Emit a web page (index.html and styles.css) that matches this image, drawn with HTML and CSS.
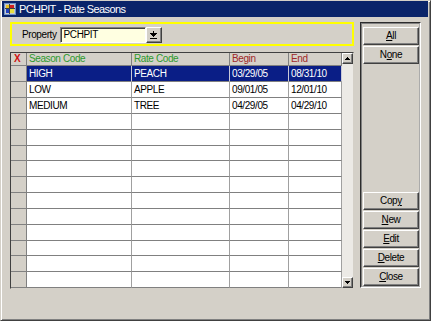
FILE: index.html
```html
<!DOCTYPE html>
<html>
<head>
<meta charset="utf-8">
<link rel="stylesheet" href="styles.css">
</head>
<body>
<div class="window">
  <div class="titlebar">
    <svg class="appicon" width="12" height="12" viewBox="0 0 12 12" shape-rendering="crispEdges">
      <rect x="0" y="0" width="12" height="12" fill="#6a8fc8"/>
      <rect x="1" y="1" width="10" height="10" fill="#c8c8c8"/>
      <rect x="2" y="2" width="4" height="4" fill="#e8c020"/>
      <rect x="6" y="2" width="4" height="4" fill="#d02020"/>
      <rect x="2" y="6" width="4" height="4" fill="#2040c0"/>
      <rect x="6" y="6" width="4" height="4" fill="#e8e040"/>
      <rect x="5" y="1" width="1" height="10" fill="#404040"/>
      <rect x="1" y="5" width="10" height="1" fill="#404040"/>
    </svg>
    <span class="title">PCHPIT - Rate Seasons</span>
  </div>
  <div class="content">
    <div class="leftcol">
      <div class="filter">
        <span class="label">Property</span>
        <div class="input">PCHPIT</div>
        <div class="ddbtn">
          <svg width="7" height="8" viewBox="0 0 7 8" shape-rendering="crispEdges">
            <rect x="3" y="0" width="1" height="2" fill="#000"/>
            <rect x="0" y="2" width="7" height="1" fill="#000"/>
            <rect x="1" y="3" width="5" height="1" fill="#000"/>
            <rect x="2" y="4" width="3" height="1" fill="#000"/>
            <rect x="3" y="5" width="1" height="1" fill="#000"/>
            <rect x="0" y="7" width="7" height="1" fill="#000"/>
          </svg>
        </div>
      </div>
      <div class="grid">
        <div class="table">
          <div class="hc sel-col"><span class="x">X</span></div>
          <div class="hc green">Season Code</div>
          <div class="hc green">Rate Code</div>
          <div class="hc red">Begin</div>
          <div class="hc red">End</div>

          <div class="rs"></div><div class="c sel">HIGH</div><div class="c sel">PEACH</div><div class="c sel">03/29/05</div><div class="c sel">08/31/10</div>
          <div class="rs"></div><div class="c">LOW</div><div class="c">APPLE</div><div class="c">09/01/05</div><div class="c">12/01/10</div>
          <div class="rs"></div><div class="c">MEDIUM</div><div class="c">TREE</div><div class="c">04/29/05</div><div class="c">04/29/10</div>
          <div class="rs"></div><div class="c"></div><div class="c"></div><div class="c"></div><div class="c"></div>
          <div class="rs"></div><div class="c"></div><div class="c"></div><div class="c"></div><div class="c"></div>
          <div class="rs"></div><div class="c"></div><div class="c"></div><div class="c"></div><div class="c"></div>
          <div class="rs"></div><div class="c"></div><div class="c"></div><div class="c"></div><div class="c"></div>
          <div class="rs"></div><div class="c"></div><div class="c"></div><div class="c"></div><div class="c"></div>
          <div class="rs"></div><div class="c"></div><div class="c"></div><div class="c"></div><div class="c"></div>
          <div class="rs"></div><div class="c"></div><div class="c"></div><div class="c"></div><div class="c"></div>
          <div class="rs"></div><div class="c"></div><div class="c"></div><div class="c"></div><div class="c"></div>
          <div class="rs"></div><div class="c"></div><div class="c"></div><div class="c"></div><div class="c"></div>
          <div class="rs"></div><div class="c"></div><div class="c"></div><div class="c"></div><div class="c"></div>
          <div class="rs"></div><div class="c"></div><div class="c"></div><div class="c"></div><div class="c"></div>
        </div>
        <div class="scrollbar">
          <div class="sbbtn">
            <svg width="5" height="3" viewBox="0 0 5 3" shape-rendering="crispEdges"><rect x="2" y="0" width="1" height="1"/><rect x="1" y="1" width="3" height="1"/><rect x="0" y="2" width="5" height="1"/></svg>
          </div>
          <div class="sbtrack"></div>
          <div class="sbbtn">
            <svg width="5" height="3" viewBox="0 0 5 3" shape-rendering="crispEdges"><rect x="0" y="0" width="5" height="1"/><rect x="1" y="1" width="3" height="1"/><rect x="2" y="2" width="1" height="1"/></svg>
          </div>
        </div>
      </div>
    </div>
    <div class="panel">
      <div class="group">
        <div class="btn"><u>A</u>ll</div>
        <div class="btn">N<u>o</u>ne</div>
      </div>
      <div class="group">
        <div class="btn">Cop<u>y</u></div>
        <div class="btn"><u>N</u>ew</div>
        <div class="btn"><u>E</u>dit</div>
        <div class="btn"><u>D</u>elete</div>
        <div class="btn"><u>C</u>lose</div>
      </div>
    </div>
  </div>
</div>
</body>
</html>
```
FILE: styles.css
```css
* { box-sizing: border-box; }
html, body { margin: 0; padding: 0; }
body {
  width: 431px;
  height: 321px;
  background: #d4d0c8;
  font-family: "Liberation Sans", Arial, sans-serif;
  font-size: 10px;
  letter-spacing: -0.4px;
  color: #000;
  overflow: hidden;
}
.window {
  width: 431px;
  height: 321px;
  background: #d4d0c8;
  border: 1px solid;
  border-color: #d4d0c8 #404040 #404040 #d4d0c8;
  box-shadow: inset 1px 1px #ffffff, inset -1px -1px #808080;
  padding: 0 2px 0 1px;
}
.titlebar {
  height: 16px;
  background: #0a246a;
  color: #fff;
  display: flex;
  align-items: center;
  padding-left: 2px;
  gap: 3px;
  font-size: 11px;
  letter-spacing: -0.6px;
}
.title { line-height: 16px; }
.appicon { display: block; }
.content {
  display: flex;
  padding: 5px 0 0 8px;
  gap: 6px;
}
.leftcol {
  width: 344px;
  display: flex;
  flex-direction: column;
  gap: 6px;
}
.filter {
  height: 24px;
  border: 2px solid #ffff00;
  display: flex;
  align-items: flex-start;
  padding: 3px 0 0 10px;
}
.label { line-height: 16px; margin-right: 3px; }
.input {
  width: 86px;
  height: 16px;
  background: #ffffe1;
  border: 1px solid;
  border-color: #808080 #ffffff #ffffff #808080;
  box-shadow: inset 1px 1px #404040;
  padding-left: 3px;
  line-height: 14px;
}
.ddbtn {
  width: 16px;
  height: 16px;
  border: 1px solid;
  border-color: #ffffff #404040 #404040 #ffffff;
  box-shadow: inset -1px -1px #808080;
  display: flex;
  align-items: center;
  justify-content: center;
}
.ddbtn svg { display: block; }
.grid {
  height: 237px;
  border: 1px solid #404040;
  border-right-color: #d4d0c8;
  border-bottom-color: #d4d0c8;
  display: flex;
  background: #fff;
}
.table {
  width: 331px;
  display: grid;
  grid-template-columns: 16px 105px 98px 59px 53px;
  grid-template-rows: 13px repeat(5, 16px) 15px repeat(5, 16px) 15px repeat(2, 16px);
}
.hc {
  background: #d4d0c8;
  border-right: 1px solid #808080;
  border-bottom: 1px solid #808080;
  line-height: 12px;
  padding-left: 2px;
  white-space: nowrap;
}
.hc.sel-col { padding-left: 3px; }
.x { color: #d01010; font-weight: bold; font-size: 10px; letter-spacing: 0; }
.green { color: #2e9a2e; }
.red { color: #a02828; }
.rs {
  background: #d4d0c8;
  border-right: 1px solid #808080;
  border-bottom: 1px solid #808080;
}
.c {
  background: #fff;
  border-right: 1px solid #a0a0a0;
  border-bottom: 1px solid #808080;
  padding-left: 2px;
  display: flex;
  align-items: center;
  white-space: nowrap;
}
.c.sel {
  background: #0a1e86;
  color: #fff;
  border-right-color: #c8c8d8;
}
.scrollbar {
  width: 11px;
  display: flex;
  flex-direction: column;
  background: #eceae6;
}
.sbtrack { flex: 1; }
.sbbtn {
  height: 11px;
  background: #d4d0c8;
  border: 1px solid;
  border-color: #ffffff #404040 #404040 #ffffff;
  box-shadow: inset -1px -1px #808080;
  display: flex;
  align-items: center;
  justify-content: center;
}
.sbbtn svg { display: block; fill: #000; }
.panel {
  width: 61px;
  height: 266px;
  border: 2px groove #ffffff;
  border-color: #808080 #ffffff #ffffff #808080;
  border-style: groove;
  padding: 3px 0 0 1px;
  display: flex;
  flex-direction: column;
  justify-content: space-between;
}
.group {
  display: flex;
  flex-direction: column;
  gap: 1px;
}
.btn {
  width: 56px;
  height: 18px;
  border: 1px solid;
  border-color: #ffffff #404040 #404040 #ffffff;
  box-shadow: inset -1px -1px #808080;
  background: #d4d0c8;
  text-align: center;
  line-height: 16px;
}
.btn u { text-decoration: underline; text-underline-offset: 1px; }
```
